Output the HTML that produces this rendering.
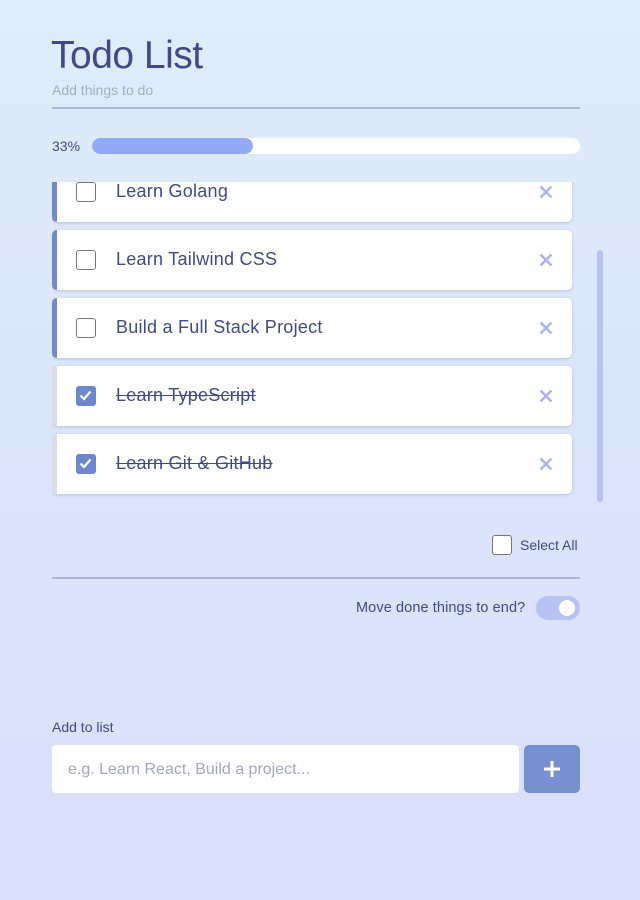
<!DOCTYPE html>
<html><head><meta charset="utf-8">
<style>
*{box-sizing:border-box;margin:0;padding:0}
html,body{width:640px;height:900px;overflow:hidden}
body{background:linear-gradient(#dfecf9,#d9dffd);font-family:"Liberation Sans",sans-serif;color:#3f4a87;position:relative}
h1{position:absolute;left:51px;top:34px;font-size:39px;font-weight:normal;color:#3f4a87;letter-spacing:-0.5px}
.sub{position:absolute;left:52px;top:82px;font-size:14px;color:#a3adc4}
.hr{position:absolute;left:52px;width:528px;height:2px;background:#a9b2d9}
.pct{position:absolute;left:52px;top:138px;font-size:14px;color:#3f4a87}
.bar{position:absolute;left:92px;top:138px;width:488px;height:16px;border-radius:8px;background:#fff;overflow:hidden}
.bar div{width:161px;height:16px;border-radius:8px;background:#93abf4}
.list{position:absolute;left:52px;top:182px;width:525px;height:320px;overflow:hidden}
.item{position:absolute;left:0;width:520px;height:60px;background:#fff;border-radius:5px;border-left:5px solid #7189d0;box-shadow:0 1px 3px rgba(80,90,140,.25)}
.item.done{border-left-color:#dcdde6}
.cb{position:absolute;left:19px;top:20px;width:20px;height:20px;border:1.5px solid #777;border-radius:3px;background:#fff}
.done .cb{background:#6e86d0;border-color:#6e86d0}
.txt{position:absolute;left:59px;top:19px;font-size:18px;color:#3f4a87;letter-spacing:0.25px}
.done .txt{text-decoration:line-through}
.x{position:absolute;right:18px;top:22px}
.sb{position:absolute;left:597px;top:250px;width:6px;height:252px;border-radius:3px;background:#b7c2f3}
.sa{position:absolute;left:492px;top:535px;width:20px;height:20px;border:1.5px solid #777;border-radius:3px;background:#fff}
.sal{position:absolute;left:520px;top:537px;font-size:14px;color:#3f4a87}
.mv{position:absolute;left:356px;top:600px;font-size:14.5px;color:#3f4a87;letter-spacing:0.1px}
.tg{position:absolute;left:536px;top:596px;width:44px;height:24px;border-radius:12px;background:#b7c2f3}
.tg div{position:absolute;right:5px;top:4px;width:16px;height:16px;border-radius:50%;background:#fff}
.al{position:absolute;left:52px;top:719px;font-size:14px;color:#3f4a87}
.inp{position:absolute;left:52px;top:745px;width:467px;height:48px;background:#fff;border-radius:4px;padding:16px 16px;font-size:16px;color:#a3a8b8}
.btn{position:absolute;left:524px;top:745px;width:56px;height:48px;background:#7690d0;border-radius:5px}
</style></head><body>
<h1>Todo List</h1>
<div class="sub">Add things to do</div>
<div class="hr" style="top:107px"></div>
<div class="pct">33%</div>
<div class="bar"><div></div></div>
<div class="list">
 <div class="item" style="top:-20px"><div class="cb"></div><div class="txt">Learn Golang</div><svg class="x" width="16" height="16" viewBox="0 0 16 16"><path d="M2.5 2.5L13.5 13.5M13.5 2.5L2.5 13.5" stroke="#a9b4ef" stroke-width="2.6"/></svg></div>
 <div class="item" style="top:48px"><div class="cb"></div><div class="txt">Learn Tailwind CSS</div><svg class="x" width="16" height="16" viewBox="0 0 16 16"><path d="M2.5 2.5L13.5 13.5M13.5 2.5L2.5 13.5" stroke="#a9b4ef" stroke-width="2.6"/></svg></div>
 <div class="item" style="top:116px"><div class="cb"></div><div class="txt">Build a Full Stack Project</div><svg class="x" width="16" height="16" viewBox="0 0 16 16"><path d="M2.5 2.5L13.5 13.5M13.5 2.5L2.5 13.5" stroke="#a9b4ef" stroke-width="2.6"/></svg></div>
 <div class="item done" style="top:184px"><div class="cb"><svg width="17" height="17" viewBox="0 0 17 17"><path d="M3.5 8.5L7 12L13.5 4.5" stroke="#fff" stroke-width="2.2" fill="none"/></svg></div><div class="txt">Learn TypeScript</div><svg class="x" width="16" height="16" viewBox="0 0 16 16"><path d="M2.5 2.5L13.5 13.5M13.5 2.5L2.5 13.5" stroke="#a9b4ef" stroke-width="2.6"/></svg></div>
 <div class="item done" style="top:252px"><div class="cb"><svg width="17" height="17" viewBox="0 0 17 17"><path d="M3.5 8.5L7 12L13.5 4.5" stroke="#fff" stroke-width="2.2" fill="none"/></svg></div><div class="txt">Learn Git &amp; GitHub</div><svg class="x" width="16" height="16" viewBox="0 0 16 16"><path d="M2.5 2.5L13.5 13.5M13.5 2.5L2.5 13.5" stroke="#a9b4ef" stroke-width="2.6"/></svg></div>
</div>
<div class="sb"></div>
<div class="sa"></div><div class="sal">Select All</div>
<div class="hr" style="top:577px"></div>
<div class="mv">Move done things to end?</div>
<div class="tg"><div></div></div>
<div class="al">Add to list</div>
<div class="inp">e.g. Learn React, Build a project...</div>
<div class="btn"><svg width="56" height="48" viewBox="0 0 56 48"><path d="M28 16V32M20 24H36" stroke="#fff" stroke-width="3"/></svg></div>
</body></html>
